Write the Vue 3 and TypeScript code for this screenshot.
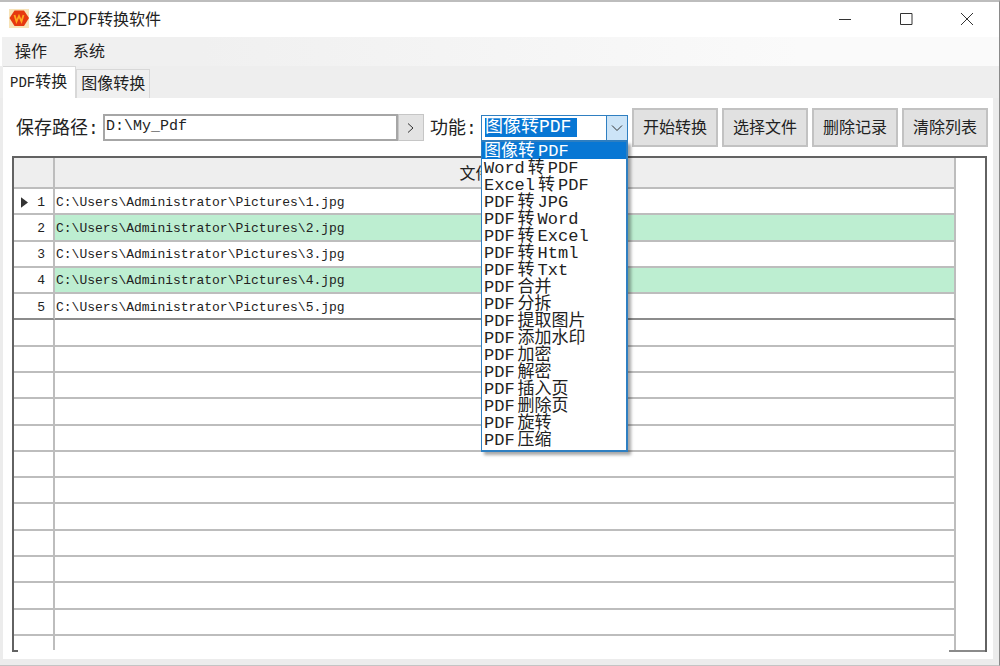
<script setup lang="ts">
import { ref } from 'vue'

interface Part { text: string; latin: boolean }

const modes: string[] = [
  '图像转PDF', 'Word转PDF', 'Excel转PDF', 'PDF转JPG', 'PDF转Word', 'PDF转Excel',
  'PDF转Html', 'PDF转Txt', 'PDF合并', 'PDF分拆', 'PDF提取图片', 'PDF添加水印',
  'PDF加密', 'PDF解密', 'PDF插入页', 'PDF删除页', 'PDF旋转', 'PDF压缩',
]
const files: string[] = [1, 2, 3, 4, 5].map(n => `C:\\Users\\Administrator\\Pictures\\${n}.jpg`)
const tabs: string[] = ['PDF转换', '图像转换']
const actions: string[] = ['开始转换', '选择文件', '删除记录', '清除列表']

const path = ref('D:\\My_Pdf')
const mode = ref(modes[0])
const open = ref(true)
const tab = ref(0)

// Latin letters and Chinese characters are set in different sizes
function parts(label: string): Part[] {
  return (label.match(/[A-Za-z]+|[^A-Za-z]+/g) ?? []).map(text => ({ text, latin: /^[A-Za-z]/.test(text) }))
}

function pick(value: string): void {
  mode.value = value
  open.value = false
}
</script>

<template>
  <div class="window">
    <header class="titlebar">
      <svg class="logo" viewBox="0 0 20 19" aria-hidden="true">
        <rect width="20" height="19" fill="#f7e3b8" />
        <path d="M5.500 1.500h9.500l5 7.500-5 8H5.500L.5 9z" fill="#e6380f" />
        <path d="M5.500 6l2 6.500 2.500-5.500 2.500 5.500 2-6.500" fill="none" stroke="#ffa51f" stroke-width="1.800" />
      </svg>
      <h1>经汇PDF转换软件</h1>
      <div class="caption">
        <button type="button" aria-label="最小化"><svg viewBox="0 0 14 14"><path d="M1 7.500h12" /></svg></button>
        <button type="button" aria-label="最大化"><svg viewBox="0 0 14 14"><path d="M1.500 1.500h11.500v11H1.500z" /></svg></button>
        <button type="button" aria-label="关闭"><svg viewBox="0 0 14 14"><path d="M1 1l12 12M13 1L1 13" /></svg></button>
      </div>
    </header>

    <nav class="menu">
      <button type="button">操作</button>
      <button type="button">系统</button>
    </nav>

    <div class="tabs" role="tablist">
      <button v-for="(t, i) in tabs" :key="t" type="button" role="tab" :aria-selected="tab === i" :class="{ active: tab === i }" @click="tab = i">
        <span v-for="p in parts(t)" :key="p.text" :class="{ latin: p.latin }">{{ p.text }}</span>
      </button>
    </div>

    <main class="panel">
      <div class="toolbar">
        <label class="caption-text" for="path">保存路径:</label>
        <input id="path" v-model="path" class="path" type="text">
        <button class="browse" type="button" aria-label="浏览">
          <svg viewBox="0 0 10 12"><path d="M2 1.500l5 4.500-5 4.500" /></svg>
        </button>
        <label class="caption-text mode-label" for="mode">功能:</label>
        <div class="combo">
          <select id="mode" v-model="mode">
            <option v-for="m in modes" :key="m" :value="m">{{ m }}</option>
          </select>
          <button class="drop" type="button" aria-label="展开" :aria-expanded="open" @click="open = !open">
            <svg viewBox="0 0 12 8"><path d="M1 1.500l5 5 5-5" /></svg>
          </button>
          <ul v-if="open" class="list" role="listbox" aria-label="功能">
            <li v-for="m in modes" :key="m" role="option" :aria-selected="m === mode" :class="{ selected: m === mode }" @click="pick(m)">
              <span v-for="p in parts(m)" :key="p.text" :class="{ latin: p.latin }">{{ p.text }}</span>
            </li>
          </ul>
        </div>
        <div class="actions">
          <button v-for="a in actions" :key="a" type="button">{{ a }}</button>
        </div>
      </div>

      <div class="frame">
        <table>
          <colgroup><col class="index"><col></colgroup>
          <thead>
            <tr><th /><th class="name" scope="col">文件</th></tr>
          </thead>
          <tbody>
            <tr v-for="(f, i) in files" :key="f" class="file">
              <td class="num">
                <div>
                  <svg v-if="i === 0" viewBox="0 0 8 12"><path d="M0 0l8 6-8 6z" /></svg>
                  {{ i + 1 }}
                </div>
              </td>
              <td>{{ f }}</td>
            </tr>
            <tr v-for="n in 12" :key="n"><td /><td /></tr>
            <tr class="rest"><td /><td /></tr>
          </tbody>
        </table>
      </div>
    </main>
  </div>
</template>

<style>
body {
  background: #fff;
}
</style>

<style scoped>
.window {
  box-sizing: border-box;
  min-height: 100vh;
  display: flex;
  flex-direction: column;
  border-top: 2px solid #bdbdbd;
  border-right: 1px solid #8a8a8a;
  border-bottom: 1px solid #c4c4c4;
  background: #fff;
  color: #222;
  font: 16px/20px "Liberation Mono", "Noto Sans CJK SC", monospace;
}
button, input, select {
  margin: 0;
  padding: 0;
  border: 0;
  border-radius: 0;
  background: none;
  color: inherit;
  font: inherit;
  outline: none;
}
svg {
  display: block;
  fill: none;
  stroke: #333;
}
.titlebar {
  box-sizing: border-box;
  display: flex;
  align-items: center;
  height: 35px;
  padding: 0 0 2px 9px;
}
.logo {
  width: 20px;
  height: 19px;
  stroke: none;
}
h1 {
  margin: 0 auto 0 6px;
  padding-bottom: 2px;
  font: 16px/20px "Noto Sans CJK SC", sans-serif;
}
.caption {
  display: flex;
  height: 100%;
  padding-right: 2px;
}
.caption button {
  display: grid;
  place-items: center;
  width: 61px;
}
.caption svg {
  width: 14px;
  height: 14px;
}
.menu {
  box-sizing: border-box;
  display: flex;
  gap: 26px;
  height: 29px;
  margin-left: 2px;
  padding: 2px 0 0 13px;
  background: linear-gradient(90deg, #f0f0f0 20%, #fafafa 80%);
}
.tabs {
  display: flex;
  align-items: flex-end;
  height: 32px;
  padding-left: 3px;
  background: #eee;
}
.tabs button {
  box-sizing: border-box;
  height: 29px;
  padding: 2px 4px 0;
  border: 1px solid #d8d8d8;
  border-bottom: 0;
  background: #f0f0f0;
}
.tabs .active {
  height: 32px;
  padding: 0 8px 0 7px;
  border-left: 0;
  background: #fff;
}
.tabs .latin {
  font-size: 14px;
}
.panel {
  flex: 1;
  display: flex;
  flex-direction: column;
  padding: 10px 5px 7px 9px;
  border: solid #ececec;
  border-width: 0 6px 6px 3px;
}
.toolbar {
  display: flex;
  align-items: center;
  height: 39px;
  padding-left: 4px;
}
.caption-text {
  width: 87px;
  padding-top: 2px;
  font-size: 18px;
  white-space: nowrap;
}
.path {
  box-sizing: border-box;
  flex: 1;
  min-width: 60px;
  height: 27px;
  padding: 0 1px 2px;
  border: 2px solid #a6a6a6;
  font-size: 15px;
}
.browse {
  box-sizing: border-box;
  display: grid;
  place-items: center;
  width: 26px;
  height: 27px;
  border: 1px solid #c6c6c6;
  background: #e3e3e3;
}
.browse svg {
  width: 10px;
  height: 12px;
}
.mode-label {
  width: 51px;
  margin-left: 6px;
}
.combo {
  position: relative;
  box-sizing: border-box;
  display: flex;
  align-items: center;
  justify-content: space-between;
  width: 147px;
  height: 26px;
  padding-left: 3px;
  border: 1px solid #2f7fc1;
}
select {
  appearance: none;
  width: 92px;
  height: 19px;
  background: #0877d4;
  color: #fff;
  font-size: 18px;
  line-height: 19px;
}
option {
  background: #fff;
  color: #222;
}
.drop {
  display: grid;
  place-items: center;
  width: 21px;
  height: 100%;
  border-left: 1px solid #2f7fc1;
  background: #cce4f7;
}
.drop svg {
  width: 12px;
  height: 8px;
}
.list {
  position: absolute;
  z-index: 1;
  top: 25px;
  left: -1px;
  right: -1px;
  margin: 0;
  padding: 0 0 2px;
  border: solid #2f7fc1;
  border-width: 1px 2px 2px 1px;
  background: #fff;
  box-shadow: 3px 3px 3px rgba(0, 0, 0, 0.35);
  list-style: none;
}
.list li {
  display: flex;
  align-items: center;
  gap: 3px;
  height: 17px;
  padding-left: 2px;
  font-size: 17px;
  line-height: 17px;
  white-space: nowrap;
}
.list span {
  padding-top: 2px;
}
.list .selected {
  background: #0877d4;
  color: #fff;
}
.actions {
  display: flex;
  gap: 4px;
  height: 100%;
  margin-left: 4px;
}
.actions button {
  box-sizing: border-box;
  width: 86px;
  padding-top: 2px;
  border: 2px solid #c2c2c2;
  background: #e1e1e1;
}
.frame {
  flex: 1;
  display: grid;
  margin-top: 9px;
  margin-right: 1px;
  padding: 0 29px 2px 0;
  border: solid #626262;
  border-width: 2px 2px 0;
  background:
    linear-gradient(#626262, #626262) left bottom / 4px 2px no-repeat,
    linear-gradient(#8a8a8a, #8a8a8a) right bottom / 36px 2px no-repeat;
}
table {
  width: 100%;
  height: 100%;
  border-collapse: separate;
  border-spacing: 0;
  table-layout: fixed;
}
.index {
  width: 41px;
}
th, td {
  box-sizing: border-box;
  height: 26px;
  padding: 0 1px;
  border: solid #bdbdbd;
  border-width: 0 2px 2px 0;
  font-size: 13px;
  line-height: 16px;
  white-space: nowrap;
}
th {
  height: 31px;
  background: #eee;
  font-weight: 400;
}
.name {
  padding: 4px 58px 0 0;
  font-size: 16px;
}
.file td {
  padding-top: 3px;
}
.file:nth-child(even) td:last-child {
  background: #bdeed1;
}
.file:nth-child(5) td {
  border-bottom-color: #8c8c8c;
}
.num div {
  display: flex;
  align-items: center;
  justify-content: flex-end;
  padding-right: 7px;
}
.num svg {
  width: 7px;
  height: 11px;
  margin-right: 9px;
  fill: #333;
  stroke: none;
}
.rest td {
  height: 14px;
  border-bottom: 0;
}
</style>
